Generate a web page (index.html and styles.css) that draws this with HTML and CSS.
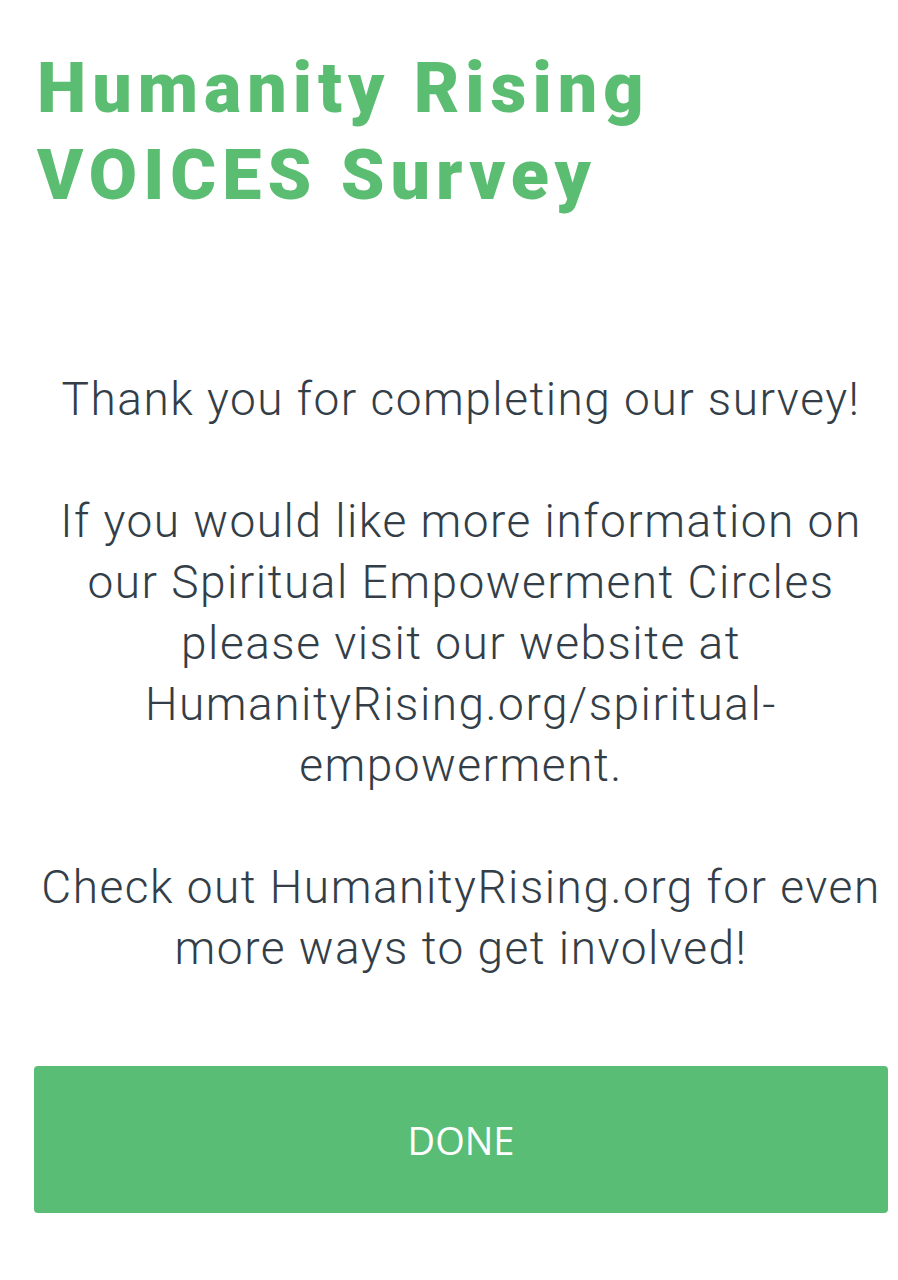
FILE: index.html
```html
<!DOCTYPE html>
<html>
<head>
<meta charset="utf-8">
<link rel="stylesheet" href="styles.css">
</head>
<body>
<main class="page">
  <h1 class="title">Humanity Rising<br>VOICES Survey</h1>
  <p class="message">Thank you for completing our survey!<br><br>If you would like more information on our Spiritual Empowerment Circles please visit our website at HumanityRising.org/spiritual-empowerment.<br><br>Check out HumanityRising.org for even more ways to get involved!</p>
  <button class="done">DONE</button>
</main>
</body>
</html>
```
FILE: styles.css
```css
html, body {
  margin: 0;
  padding: 0;
  background: #ffffff;
}
.page {
  width: 854px;
  margin-left: 34px;
  display: flex;
  flex-direction: column;
}
.title {
  margin: 45px 0 0 3px;
  font-family: Roboto, "Liberation Sans", sans-serif;
  font-weight: 900;
  font-size: 70px;
  line-height: 87px;
  letter-spacing: 6px;
  color: #5bbd72;
}
.message {
  margin: 150px 0 0 0;
  font-family: Roboto, "Noto Sans", sans-serif;
  font-weight: 300;
  font-size: 46px;
  line-height: 61px;
  letter-spacing: 1.5px;
  color: #333e48;
  text-align: center;
}
.done {
  margin-top: 87px;
  height: 147px;
  width: 100%;
  border: none;
  border-radius: 4px;
  background: #59bd76;
  color: #ffffff;
  font-family: "Open Sans", sans-serif;
  font-weight: 400;
  font-size: 38px;
  padding: 0;
}
```
